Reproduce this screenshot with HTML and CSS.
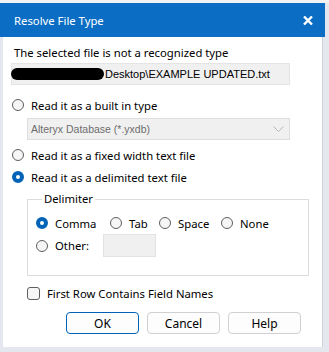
FILE: index.html
```html
<!DOCTYPE html>
<html lang="en">
<head>
    <meta charset="UTF-8">
    <meta name="viewport" content="width=device-width, initial-scale=1.0">
    <title>Resolve File Type</title>
    <link rel="stylesheet" href="styles.css">
</head>
<body>
    <div class="dialog">
        <div class="titlebar">
            <span class="title">Resolve File Type</span>
            <svg class="close" width="10" height="9" viewBox="0 0 10 9">
                <path d="M1 0.5 L9 8.5 M9 0.5 L1 8.5" stroke="#fff" stroke-width="2.4" fill="none"/>
            </svg>
        </div>
        <div class="content">
            <p class="intro">The selected file is not a recognized type</p>
            <div class="path">
                <span class="redact"></span>
                <span class="path-text">Desktop\EXAMPLE UPDATED.txt</span>
            </div>

            <label class="option first">
                <input type="radio" name="mode">
                <span>Read it as a built in type</span>
            </label>
            <div class="select">
                <span>Alteryx Database (*.yxdb)</span>
                <svg width="11" height="6" viewBox="0 0 11 6">
                    <path d="M0.5 0.5 L5.5 5.5 L10.5 0.5" stroke="#b8b8b8" fill="none"/>
                </svg>
            </div>
            <label class="option second">
                <input type="radio" name="mode">
                <span>Read it as a fixed width text file</span>
            </label>
            <label class="option third">
                <input type="radio" name="mode" checked>
                <span>Read it as a delimited text file</span>
            </label>

            <fieldset class="delimiter">
                <legend>Delimiter</legend>
                <div class="delim-row">
                    <label class="option comma"><input type="radio" name="delim" checked><span>Comma</span></label>
                    <label class="option tab"><input type="radio" name="delim"><span>Tab</span></label>
                    <label class="option space"><input type="radio" name="delim"><span>Space</span></label>
                    <label class="option"><input type="radio" name="delim"><span>None</span></label>
                </div>
                <div class="delim-row other-row">
                    <label class="option"><input type="radio" name="delim"><span>Other:</span></label>
                    <span class="other-box"></span>
                </div>
            </fieldset>

            <label class="option check">
                <input type="checkbox">
                <span>First Row Contains Field Names</span>
            </label>

            <div class="buttons">
                <button class="default">OK</button>
                <button>Cancel</button>
                <button>Help</button>
            </div>
        </div>
    </div>
</body>
</html>
```

FILE: styles.css
```css
body {
    margin: 0;
    background-color: #e4e7ed;
    font-family: "Noto Sans", "Open Sans", sans-serif;
    font-size: 11.3px;
    color: #000;
    border-top: 3px solid #f2f3f5;
}
.dialog {
    width: 325px;
    height: 344px;
}
.titlebar {
    height: 34px;
    background-color: #0b6ec4;
    display: flex;
    align-items: center;
    justify-content: space-between;
    padding: 0 12px 0 14px;
}
.title {
    color: #fff;
}
.content {
    margin-left: 3px;
    width: 320px;
    height: 310px;
    background: white;
    border-right: 1px solid #cdd0d6;
    padding: 0 0 0 8px;
    box-sizing: border-box;
    display: flex;
    flex-direction: column;
}
.intro {
    margin: 8px 0 0 3px;
    line-height: 16px;
}
.path {
    margin-top: 2px;
    width: 279px;
    height: 22px;
    box-sizing: border-box;
    background-color: #f0f0f0;
    border: 1px solid #e4e4e4;
    display: flex;
    align-items: center;
}
.redact {
    width: 93px;
    height: 12px;
    background: #000;
    border-radius: 7px;
    margin-left: -1px;
}
.path-text {
    font-family: "Liberation Sans", Arial, sans-serif;
    font-size: 11px;
    margin-left: 1px;
}
.option {
    display: flex;
    align-items: center;
    height: 16px;
    gap: 7px;
}
.option input {
    appearance: none;
    margin: 0;
    width: 12px;
    height: 12px;
    border: 1px solid #5e5e5e;
    border-radius: 50%;
    background: #f6f6f6;
    box-sizing: border-box;
    flex: none;
}
.option input:checked {
    border: 4px solid #0063b8;
    background: #fff;
}
.option input[type="checkbox"] {
    width: 13px;
    height: 13px;
    border-radius: 3px;
}
.first {
    margin-top: 12px;
    margin-left: 1px;
}
.second {
    margin-top: 7px;
    margin-left: 1px;
}
.third {
    margin-top: 6px;
    margin-left: 1px;
}
.select {
    margin: 5px 0 0 16px;
    width: 263px;
    height: 22px;
    box-sizing: border-box;
    background: #f0f0f0;
    border: 1px solid #dedede;
    display: flex;
    align-items: center;
    justify-content: space-between;
    padding: 0 5px 0 3px;
    font-family: "Liberation Sans", Arial, sans-serif;
    font-size: 10.5px;
    color: #6d6d6d;
}
.delimiter {
    margin: 0 0 0 16px;
    margin-top: 6px;
    padding: 0 0 0 8px;
    width: 282px;
    height: 85px;
    box-sizing: border-box;
    border: 1px solid #dcdcdc;
}
.delimiter legend {
    padding: 0 2px;
    margin-left: 6px;
    line-height: 16px;
}
.delim-row {
    display: flex;
    align-items: center;
}
.delim-row:first-of-type {
    margin-top: 8px;
}
.comma { width: 74px; }
.tab { width: 49px; }
.space { width: 62px; }
.other-row {
    margin-top: 3px;
}
.other-row .option {
    width: 67px;
}
.other-box {
    width: 53px;
    height: 23px;
    box-sizing: border-box;
    background: #f0f0f0;
    border: 1px solid #e2e2e2;
}
.check {
    margin: 9px 0 0 16px;
}
.buttons {
    display: flex;
    gap: 8px;
    margin: 11px 0 0 55px;
}
.buttons button {
    width: 73px;
    height: 22px;
    font-family: inherit;
    font-size: 12px;
    background: #fdfdfd;
    border: 1px solid #d0d0d0;
    border-radius: 4px;
    padding: 0;
}
.buttons button.default {
    border-color: #0063b8;
}
```
